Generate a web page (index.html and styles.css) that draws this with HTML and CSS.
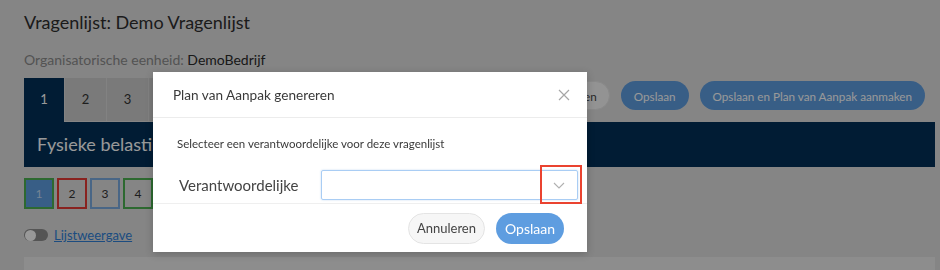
FILE: index.html
```html
<!DOCTYPE html>
<html lang="nl">
<head>
    <meta charset="UTF-8">
    <title>Vragenlijst: Demo Vragenlijst</title>
    <link rel="stylesheet" href="styles.css">
</head>
<body>
    <div class="page">
        <h1 class="page-title">Vragenlijst: Demo Vragenlijst</h1>
        <p class="unit">Organisatorische eenheid: <span class="unit-name">DemoBedrijf</span></p>

        <div class="toolbar">
            <div class="tabs">
                <div class="tab active">1</div>
                <div class="tab">2</div>
                <div class="tab">3</div>
                <div class="tab">4</div>
            </div>
            <div class="actions">
                <button class="btn btn-light">Annuleren</button>
                <button class="btn btn-primary">Opslaan</button>
                <button class="btn btn-primary">Opslaan en Plan van Aanpak aanmaken</button>
            </div>
        </div>

        <div class="section-bar">Fysieke belasting</div>

        <div class="steps">
            <div class="step step-current">1</div>
            <div class="step step-red">2</div>
            <div class="step step-blue">3</div>
            <div class="step step-green">4</div>
            <div class="step step-green">5</div>
        </div>

        <div class="view-toggle">
            <span class="switch"><span class="knob"></span></span>
            <a href="#" class="view-link">Lijstweergave</a>
        </div>

        <div class="panel"></div>
    </div>

    <div class="overlay"></div>

    <div class="modal">
        <div class="modal-header">
            <span class="modal-title">Plan van Aanpak genereren</span>
            <svg class="close" width="12" height="12" viewBox="0 0 12 12">
                <path d="M1 1 L11 11 M11 1 L1 11" stroke="#a6a6a6" stroke-width="1.2" fill="none"/>
            </svg>
        </div>
        <div class="modal-body">
            <p class="modal-text">Selecteer een verantwoordelijke voor deze vragenlijst</p>
            <div class="form-row">
                <label class="form-label">Verantwoordelijke</label>
                <div class="select">
                    <svg class="chevron" width="12" height="7" viewBox="0 0 12 7">
                        <path d="M1 1 L6 6 L11 1" stroke="#b0b0b0" stroke-width="1.1" fill="none"/>
                    </svg>
                    <div class="marker"></div>
                </div>
            </div>
        </div>
        <div class="modal-footer">
            <button class="btn btn-light">Annuleren</button>
            <button class="btn btn-primary">Opslaan</button>
        </div>
    </div>
</body>
</html>
```

FILE: styles.css
```css
body {
    margin: 0;
    padding: 0;
    background-color: #dedede;
    font-family: Lato, "Open Sans", sans-serif;
    color: #333;
    overflow: hidden;
}

.page {
    padding: 11px 5px 0 24px;
}

.page-title {
    margin: 0;
    font-size: 18px;
    font-weight: 400;
    line-height: 22px;
    color: #2e2e2e;
}

.unit {
    margin: 18px 0 0;
    font-size: 14px;
    line-height: 18px;
    color: #8a8a8a;
}

.unit-name {
    color: #2a2a2a;
}

.toolbar {
    display: flex;
    justify-content: space-between;
    margin-top: 9px;
}

.tabs {
    display: flex;
}

.tab {
    width: 41px;
    height: 43px;
    line-height: 43px;
    text-align: center;
    font-size: 13px;
    background-color: #cbcbcb;
    border-left: 1px solid #d9d9d9;
    color: #333;
}

.tab.active {
    width: 40px;
    height: 44px;
    border-left: none;
    background-color: #033058;
    color: #fff;
}

.actions {
    display: flex;
    gap: 11px;
    margin-top: 3px;
    margin-right: 10px;
}

.btn {
    height: 29px;
    padding: 0 12px;
    border-radius: 15px;
    font-family: Lato, "Open Sans", sans-serif;
    font-size: 11.7px;
    border: 1px solid transparent;
}

.btn-light {
    background-color: #f6f6f6;
    border-color: #e4e4e4;
    color: #444;
}

.btn-primary {
    background-color: #5e9de0;
    color: #fff;
}

.section-bar {
    height: 45px;
    line-height: 45px;
    padding-left: 13px;
    background-color: #033058;
    color: #fff;
    font-size: 18px;
}

.steps {
    display: flex;
    gap: 3px;
    margin-top: 11px;
}

.step {
    width: 26px;
    height: 27px;
    line-height: 27px;
    text-align: center;
    font-size: 12px;
    color: #333;
    border: 2px solid #4caf50;
}

.step-current {
    background-color: #5e9de0;
    color: #c4dcf6;
}

.step-red {
    border-color: #e53935;
}

.step-blue {
    border-color: #7aaae0;
}

.view-toggle {
    display: flex;
    align-items: center;
    gap: 6px;
    margin-top: 18px;
    height: 16px;
}

.switch {
    width: 23px;
    height: 12px;
    border-radius: 6px;
    background-color: #8e8e8e;
    display: flex;
    align-items: center;
    padding-left: 1px;
}

.knob {
    width: 11px;
    height: 11px;
    border-radius: 50%;
    background-color: #fff;
}

.view-link {
    font-size: 13px;
    color: #2f7fd6;
}

.panel {
    margin-top: 14px;
    height: 40px;
    background-color: #ececec;
}

.overlay {
    position: fixed;
    inset: 0;
    background-color: rgba(0, 0, 0, 0.4);
}

.modal {
    position: fixed;
    left: 153px;
    top: 72px;
    width: 434px;
    height: 180px;
    background-color: #fff;
    box-shadow: 0 2px 8px rgba(0, 0, 0, 0.2);
    display: flex;
    flex-direction: column;
}

.modal-header {
    height: 45px;
    border-bottom: 1px solid #ececec;
    display: flex;
    align-items: center;
    justify-content: space-between;
    padding: 0 17px 0 20px;
}

.modal-title {
    font-size: 13.6px;
    color: #3a3a3a;
}

.modal-body {
    padding: 18px 9px 0 24px;
    border-bottom: 1px solid #efefef;
}

.modal-text {
    margin: 0;
    font-size: 11.5px;
    line-height: 16px;
    color: #3a3a3a;
}

.form-row {
    display: flex;
    align-items: center;
    margin-top: 18px;
    padding-bottom: 3px;
}

.form-label {
    width: 142px;
    padding-left: 2px;
    font-size: 15px;
    color: #444;
}

.select {
    position: relative;
    flex: 1;
    height: 28px;
    border: 1px solid #a9cdf4;
    border-radius: 2px;
    box-shadow: 0 0 2px rgba(94, 157, 224, 0.4);
    display: flex;
    align-items: center;
    justify-content: flex-end;
    padding-right: 12px;
}

.marker {
    position: absolute;
    right: -5px;
    top: -6px;
    width: 38px;
    height: 35px;
    border: 2px solid #ea4330;
}

.modal-footer {
    flex: 1;
    display: flex;
    justify-content: flex-end;
    align-items: center;
    gap: 11px;
    padding-right: 23px;
}

.modal-footer .btn {
    height: 31px;
    padding: 0 8px;
    border-radius: 16px;
    font-size: 13px;
}

.modal-footer .btn-primary {
    font-size: 14px;
}
```
